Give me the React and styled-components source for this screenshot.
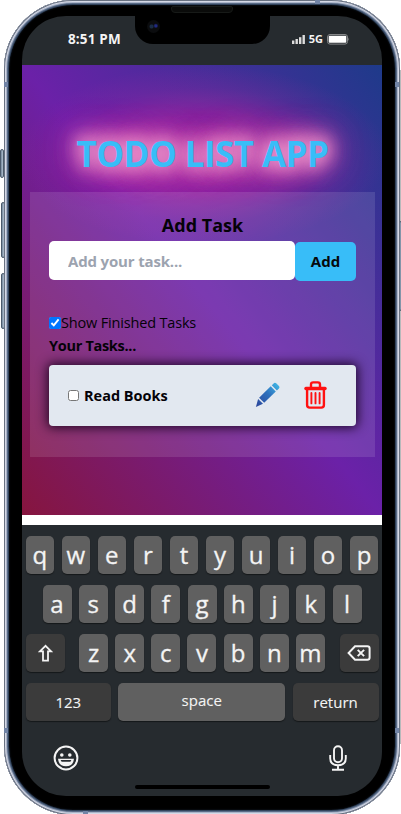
import React from "react";
import styled, { createGlobalStyle } from "styled-components";

const Global = createGlobalStyle`
  * { box-sizing: border-box; }
  body { margin: 0; background: #fff; overflow: hidden; font-family: "Open Sans", "Noto Sans", sans-serif; }
  button, input { font-family: inherit; }
`;

const Stage = styled.div`
  position: relative;
  width: 401px;
  height: 814px;
  padding-left: 4px;
  overflow: hidden;
`;

const Device = styled.div`
  position: relative;
  width: 396px;
  height: 815px;
  padding: 16px 18px 18px 18px;
  border-radius: 69px;
  background: #000;
  box-shadow:
    inset 0 0 0 1px #697282,
    inset 0 0 0 2px #d5d9e6,
    inset 0 0 0 3px #a9b3c8,
    inset 0 0 0 4px #596b86,
    inset 0 0 0 5px #31435c,
    inset 0 0 2px 5px #182334;
`;

const SideButton = styled.div`
  position: absolute;
  left: ${(p) => p.$x}px;
  top: ${(p) => p.$y}px;
  width: 4px;
  height: ${(p) => p.$h}px;
  border: 1px solid #4b5a6c;
  border-radius: 2px;
  background: linear-gradient(90deg, #73869c, #b3c2d0);
`;

const RightEdge = styled.div`
  position: absolute;
  left: 399px;
  top: 70px;
  width: 2px;
  height: 674px;
  background: #b7b9bb;
`;

const Antenna = styled.div`
  position: absolute;
  left: ${(p) => p.$x}px;
  top: ${(p) => p.$y}px;
  width: ${(p) => p.$w}px;
  height: ${(p) => p.$h}px;
  background: #7184a6;
`;

const Screen = styled.div`
  display: flex;
  flex-direction: column;
  height: 780px;
  border-radius: 44px;
  overflow: hidden;
  background: #262b2f;
`;

const StatusBar = styled.div`
  display: flex;
  align-items: center;
  justify-content: space-between;
  height: 49px;
  padding: 0 32px 3px 46px;
  color: #f4f4f4;
`;

const Clock = styled.span`
  font-size: 13.5px;
  font-weight: 700;
  line-height: 16px;
  letter-spacing: 0.15px;
`;

const StatusIcons = styled.div`
  display: flex;
  align-items: center;
  gap: 4px;
  font-size: 11px;
  font-weight: 700;
  line-height: 14px;
`;

const Notch = styled.div`
  position: absolute;
  left: 131px;
  top: 14px;
  width: 135px;
  height: 30px;
  border-radius: 0 0 18px 18px;
  background: #000;
`;

const Camera = styled.div`
  position: absolute;
  left: 12px;
  top: 6px;
  width: 13px;
  height: 13px;
  border-radius: 50%;
  background: radial-gradient(circle at 35% 50%, #1a2d45 0 1.5px, transparent 2.5px),
    radial-gradient(circle at 68% 45%, #202a83 0 1px, transparent 2.5px), #0b0c0e;
`;

const Speaker = styled.div`
  position: absolute;
  left: 167px;
  top: 6px;
  width: 62px;
  height: 7px;
  border: 1px solid #171a18;
  border-radius: 2px 2px 4px 4px;
  background: #0a0b0a;
`;

const Page = styled.main`
  display: flex;
  flex-direction: column;
  height: 450px;
  padding: 64px 7px 0 8px;
  background:
    radial-gradient(185px 90px at 181px 90px, rgba(195, 40, 160, 0.62) 0%, rgba(190, 40, 160, 0.48) 45%,
      rgba(180, 40, 160, 0.17) 75%, rgba(170, 40, 165, 0) 100%),
    linear-gradient(to top right, #86153e, #6b21a8, #1e3a8a);
`;

const Title = styled.h1`
  margin: 0;
  height: 63px;
  text-align: center;
  white-space: nowrap;
  color: #38bdf8;
  font-size: 35px;
  font-weight: 700;
  line-height: 50px;
  letter-spacing: -0.55px;
  text-shadow: 0 0 16px #eda0d0, 0 0 20px #ee90c8, 0 0 24px #e87cc0, 0 0 28px #e068b8,
    0 0 34px #d850b0, 0 0 40px #c840a8;
`;

const Panel = styled.section`
  display: flex;
  flex-direction: column;
  height: 265px;
  padding: 20px 19px 0;
  background: rgba(255, 255, 255, 0.115);
  color: #050208;
`;

const Heading = styled.h2`
  margin: 0;
  height: 29px;
  text-align: center;
  font-size: 18px;
  font-weight: 700;
  line-height: 26px;
`;

const Form = styled.div`
  display: grid;
  grid-template-columns: 246px 61px;
  align-items: start;
  height: 74px;
`;

const TaskInput = styled.input`
  height: 39px;
  padding: 0 19px;
  border: 0;
  border-radius: 5px;
  background: #fff;
  font-size: 15px;
  font-weight: 700;
  letter-spacing: -0.16px;
  &::placeholder { color: #9ca3af; opacity: 1; }
`;

const AddButton = styled.button`
  height: 39px;
  margin-top: 1px;
  padding: 0 0 2px;
  border: 0;
  border-radius: 5px;
  background: #38bdf8;
  color: #06090c;
  font-size: 15px;
  font-weight: 700;
`;

const Filter = styled.label`
  display: flex;
  align-items: center;
  height: 16px;
  font-size: 14.5px;
  line-height: 16px;
  letter-spacing: -0.17px;
  white-space: nowrap;
`;

const Check = styled.input`
  width: ${(p) => p.$size}px;
  height: ${(p) => p.$size}px;
  margin: 0;
  flex: none;
`;

const ListTitle = styled.h3`
  margin: 6px 0 10px;
  font-size: 14.5px;
  font-weight: 700;
  line-height: 18px;
  letter-spacing: -0.3px;
`;

const Task = styled.div`
  display: flex;
  align-items: center;
  height: 61px;
  padding: 0 29px 0 19px;
  border-radius: 4px;
  background: #e2e8f0;
  box-shadow: 0 0 11px 2px rgba(20, 0, 25, 0.85);
`;

const TaskName = styled.span`
  margin-left: 5px;
  flex: 1;
  font-size: 14.5px;
  font-weight: 700;
`;

const TaskActions = styled.div`
  display: flex;
  align-items: center;
  gap: 24px;
  padding-bottom: 2px;
`;

const Strip = styled.div`
  height: 10px;
  flex: none;
  background: #fff;
`;

const Keyboard = styled.div`
  display: grid;
  grid-template-rows: repeat(4, 38px);
  row-gap: 11px;
  justify-items: center;
  padding: 11px 3.5px 0 3.5px;
  color: #f4f4f4;
`;

const KeyRow = styled.div`
  display: grid;
  width: ${(p) => p.$width}px;
  grid-template-columns: ${(p) => p.$columns};
  justify-content: space-between;
`;

const Key = styled.div`
  display: flex;
  align-items: center;
  justify-content: center;
  padding-bottom: ${(p) => p.$lift || 0}px;
  border-radius: 5px;
  background: ${(p) => (p.$dark ? "#3b3b3b" : "#606060")};
  box-shadow: 0 1px 1px #15181a;
  font-size: ${(p) => (p.$word ? 15 : 24)}px;
  line-height: 1;
  -webkit-text-stroke: ${(p) => (p.$word ? 0.1 : 0.3)}px #f4f4f4;
`;

const BottomBar = styled.div`
  display: flex;
  justify-content: space-between;
  align-items: center;
  padding: 24px 35px 0 31px;
`;

const HomeIndicator = styled.div`
  align-self: center;
  width: 135px;
  height: 4px;
  margin-top: 14px;
  border-radius: 2px;
  background: #000;
`;

const Signal = () => (
  <svg width="13" height="9" viewBox="0 0 13 9" fill="#ddd">
    <rect x="0" y="5.5" width="2.4" height="3.5" />
    <rect x="3.5" y="4" width="2.4" height="5" />
    <rect x="7" y="2.2" width="2.4" height="6.8" />
    <rect x="10.5" y="0" width="2.4" height="9" />
  </svg>
);

const Battery = () => (
  <svg width="23" height="11" viewBox="0 0 23 11">
    <rect x="0.5" y="0.5" width="20" height="9.6" rx="2.5" fill="none" stroke="#858789" />
    <rect x="1.7" y="1.8" width="17.6" height="7" rx="1" fill="#fff" />
    <path d="M21.2 3.5q1.8 1.8 0 3.5z" fill="#77797b" />
  </svg>
);

const Pencil = () => (
  <svg width="25" height="26" viewBox="0 0 25 26">
    <defs>
      <linearGradient id="ink" x1="0" y1="25" x2="24" y2="1" gradientUnits="userSpaceOnUse">
        <stop offset="0" stopColor="#2c4399" />
        <stop offset="0.55" stopColor="#2d70bd" />
        <stop offset="1" stopColor="#43bde9" />
      </linearGradient>
    </defs>
    <g fill="url(#ink)">
      <path d="M18.4 1.7Q19.9.1 21.5 1.6L23.7 3.7Q25.2 5.2 23.7 6.7L21.9 8.4 16.8 3.3z" />
      <path d="M15.7 4.3 20.8 9.4 9.2 20.8 4.1 15.7z" />
      <path d="M3.1 16.9 8 21.8.9 25z" />
    </g>
  </svg>
);

const Trash = () => (
  <svg width="23" height="28" viewBox="0 0 23 28" fill="none" stroke="#ff1111" strokeLinecap="round">
    <path d="M1.9 7.5H21.1" strokeWidth="3.3" />
    <path d="M7 6V3.6Q7 1.4 9.2 1.4h4.6Q16 1.4 16 3.6V6" strokeWidth="2.4" />
    <path d="M3.1 8.5V24Q3.1 26.6 5.7 26.6H17.3Q19.9 26.6 19.9 24V8.5" strokeWidth="2.4" />
    <path d="M7.4 12V22.4M11.5 12V22.4M15.6 12V22.4" strokeWidth="1.9" />
  </svg>
);

const Shift = () => (
  <svg width="15" height="18" viewBox="0 0 15 18" fill="none" stroke="#f4f4f4" strokeWidth="1.8">
    <path d="M7.5 1.8 1.9 7.4H5V16.6H10V7.4H13.1z" />
  </svg>
);

const Backspace = () => (
  <svg width="24" height="16" viewBox="0 0 24 16" fill="none" stroke="#f4f4f4" strokeWidth="2">
    <path d="M8 1.3H20.3Q22.6 1.3 22.6 3.6V12.4Q22.6 14.7 20.3 14.7H8L1.6 8z" />
    <path d="M10.7 4.9 17.1 11.1M17.1 4.9 10.7 11.1" />
  </svg>
);

const Smile = () => (
  <svg width="26" height="26" viewBox="0 0 26 26">
    <circle cx="13" cy="13" r="11.4" fill="none" stroke="#f4f4f4" strokeWidth="2" />
    <circle cx="8.8" cy="10" r="1.8" fill="#f4f4f4" />
    <circle cx="16.8" cy="10" r="1.8" fill="#f4f4f4" />
    <path d="M5 13.7H21Q20.2 21.3 13 21.3T5 13.7z" fill="#f4f4f4" />
    <path d="M7.6 14.9H18.4L17.4 16.8H8.6z" fill="#262b2f" />
  </svg>
);

const Mic = () => (
  <svg width="18" height="26" viewBox="0 0 18 26" fill="none" stroke="#f4f4f4" strokeWidth="1.9">
    <rect x="5" y="1.2" width="8" height="16" rx="4" />
    <path d="M1.2 10V13.2Q1.2 20.2 9 20.2T16.8 13.2V10M9 20.2V24.7M3 24.7H15" />
  </svg>
);

const letters = (text) => text.split("").map((c) => <Key key={c} $lift={1}>{c}</Key>);

export default function App() {
  return (
    <Stage>
      <Global />
      <RightEdge />
      <SideButton $x={0} $y={149} $h={29} />
      <SideButton $x={1} $y={202} $h={56} />
      <SideButton $x={1} $y={273} $h={56} />
      <SideButton $x={399} $y={221} $h={90} />
      <Device>
        <Screen>
          <StatusBar>
            <Clock>8:51 PM</Clock>
            <StatusIcons>
              <Signal />
              <span>5G</span>
              <Battery />
            </StatusIcons>
          </StatusBar>
          <Page>
            <Title>TODO LIST APP</Title>
            <Panel>
              <Heading>Add Task</Heading>
              <Form>
                <TaskInput placeholder="Add your task..." />
                <AddButton>Add</AddButton>
              </Form>
              <Filter>
                <Check type="checkbox" $size={12} defaultChecked />
                Show Finished Tasks
              </Filter>
              <ListTitle>Your Tasks...</ListTitle>
              <Task>
                <Check type="checkbox" $size={11} />
                <TaskName>Read Books</TaskName>
                <TaskActions>
                  <Pencil />
                  <Trash />
                </TaskActions>
              </Task>
            </Panel>
          </Page>
          <Strip />
          <Keyboard>
            <KeyRow $width={353} $columns="repeat(10, 28.6px)">{letters("qwertyuiop")}</KeyRow>
            <KeyRow $width={319} $columns="repeat(9, 29px)">{letters("asdfghjkl")}</KeyRow>
            <KeyRow $width={353} $columns="39px 246px 39px">
              <Key $dark><Shift /></Key>
              <KeyRow $width={246} $columns="repeat(7, 29px)">{letters("zxcvbnm")}</KeyRow>
              <Key $dark><Backspace /></Key>
            </KeyRow>
            <KeyRow $width={353} $columns="85.5px 167px 86px">
              <Key $dark $word>123</Key>
              <Key $word $lift={3}>space</Key>
              <Key $dark $word>return</Key>
            </KeyRow>
          </Keyboard>
          <BottomBar>
            <Smile />
            <Mic />
          </BottomBar>
          <HomeIndicator />
        </Screen>
        <Notch>
          <Camera />
        </Notch>
        <Speaker />
        <Antenna $x={0} $y={82} $w={4} $h={5} />
        <Antenna $x={391} $y={82} $w={4} $h={5} />
        <Antenna $x={0} $y={728} $w={4} $h={5} />
        <Antenna $x={391} $y={728} $w={4} $h={5} />
        <Antenna $x={311} $y={0} $w={5} $h={4} />
        <Antenna $x={79} $y={811} $w={5} $h={3} />
      </Device>
    </Stage>
  );
}
